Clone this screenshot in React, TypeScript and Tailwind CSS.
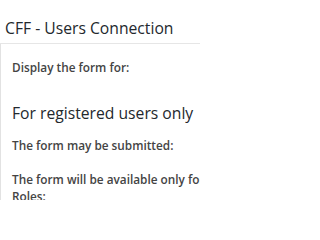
export default function App() {
  return (
    <div className="w-[200px] h-[200px] overflow-hidden bg-white" style={{ fontFamily: '"Open Sans", sans-serif' }}>
      <div className="h-[44px] border-b border-[#e6e6e6] pl-[5px] pt-[17px]">
        <div className="text-[15.7px] leading-[22px] text-[#23282d] whitespace-nowrap">CFF - Users Connection</div>
      </div>
      <div className="border-l border-[#e2e2e2] pl-[11px] pt-[15px] h-[200px]">
        <div className="text-[11.8px] leading-[17px] font-semibold text-[#444] whitespace-nowrap">Display the form for:</div>
        <div className="mt-[26px] text-[15.7px] leading-[22px] text-[#23282d] whitespace-nowrap">For registered users only</div>
        <div className="mt-[13px] text-[11.8px] leading-[17px] font-semibold text-[#444] whitespace-nowrap">The form may be submitted:</div>
        <div className="mt-[17px] text-[11.8px] leading-[17px] font-semibold text-[#444] whitespace-nowrap">
          The form will be available only for the selected roles
          <br />
          Roles:
        </div>
      </div>
    </div>
  );
}
